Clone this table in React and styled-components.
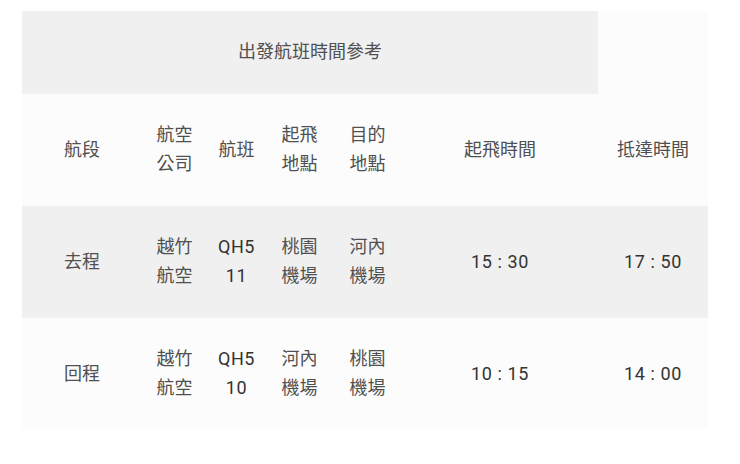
import React from 'react';
import styled, { createGlobalStyle } from 'styled-components';

const GlobalStyle = createGlobalStyle`
    body {
        margin: 0;
        background: #ffffff;
        font-family: Roboto, "Noto Sans CJK TC", sans-serif;
    }
`

const flights = [
    { leg: '去程', airline: '越竹航空', no: 'QH511', from: '桃園機場', to: '河內機場', dep: '15 : 30', arr: '17 : 50' },
    { leg: '回程', airline: '越竹航空', no: 'QH510', from: '河內機場', to: '桃園機場', dep: '10 : 15', arr: '14 : 00' },
];

const widths = [120, 65, 59, 67, 69, 196, 110];

const FlightTable = () => {
    return (
        <Page>
            <Table>
                <colgroup>
                    {widths.map((w, i) => <col key={i} style={{ width: w }} />)}
                </colgroup>
                <tbody>
                    <Row $shade>
                        <Cell colSpan={6}>出發航班時間參考</Cell>
                        <Cell $light></Cell>
                    </Row>
                    <Row>
                        <Cell>航段</Cell>
                        <Cell>航空公司</Cell>
                        <Cell>航班</Cell>
                        <Cell>起飛地點</Cell>
                        <Cell>目的地點</Cell>
                        <Cell>起飛時間</Cell>
                        <Cell>抵達時間</Cell>
                    </Row>
                    {flights.map((f, i) => (
                        <Row key={f.no} $shade={i % 2 === 0} $last={i === flights.length - 1}>
                            <Cell>{f.leg}</Cell>
                            <Cell>{f.airline}</Cell>
                            <Cell $num>{f.no}</Cell>
                            <Cell>{f.from}</Cell>
                            <Cell>{f.to}</Cell>
                            <Cell $num>{f.dep}</Cell>
                            <Cell $num>{f.arr}</Cell>
                        </Row>
                    ))}
                </tbody>
            </Table>
        </Page>
    );
}

const Page = styled.div`
    padding: 11px 0 0 22px;
`

const Table = styled.table`
    width: 686px;
    table-layout: fixed;
    border-collapse: collapse;
    border-spacing: 0;
`

const Row = styled.tr`
    background: ${p => p.$shade ? '#f0f0f0' : '#fcfcfc'};
    td {
        padding-bottom: ${p => p.$last ? '25.2px' : '27.2px'};
    }
`

const Cell = styled.td`
    padding: 27.2px 10px;
    text-align: center;
    vertical-align: middle;
    font-size: 18px;
    line-height: 28.8px;
    letter-spacing: ${p => p.$num ? '0.6px' : '0'};
    word-break: break-all;
    color: ${p => p.$num ? '#333333' : '#505050'};
    background: ${p => p.$light ? '#fcfcfc' : 'transparent'};
`

const App = () => (
    <>
        <GlobalStyle />
        <FlightTable />
    </>
);

export default App;
